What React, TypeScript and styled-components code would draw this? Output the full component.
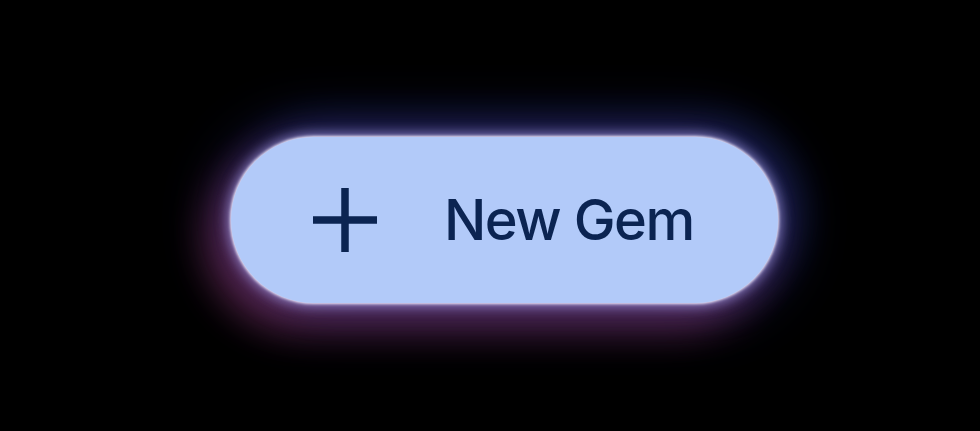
import styled, { createGlobalStyle } from 'styled-components';

const GlobalStyle = createGlobalStyle`
  html, body {
    margin: 0;
    padding: 0;
    background: #000000;
  }
`;

const Stage = styled.div`
  width: 980px;
  height: 431px;
  box-sizing: border-box;
  padding: 137px 0 0 231px;
  background: #000000;
  overflow: hidden;
`;

const GemButton = styled.button`
  display: flex;
  align-items: center;
  gap: 67px;
  box-sizing: border-box;
  width: 547px;
  height: 166px;
  padding: 0 0 0 82px;
  border: none;
  border-radius: 83px;
  background: #b2caf9;
  color: #0b2452;
  font-family: Inter, 'Noto Sans', sans-serif;
  font-size: 56px;
  font-weight: 500;
  letter-spacing: -1.5px;
  cursor: pointer;
  box-shadow:
    0 0 3px 1px rgba(245, 240, 255, 0.95),
    0 0 12px 4px rgba(185, 180, 255, 0.55),
    0 0 55px 16px rgba(40, 45, 130, 0.45),
    12px -8px 40px 6px rgba(60, 90, 210, 0.3),
    -16px 18px 40px 6px rgba(215, 75, 135, 0.48);
`;

const PlusIcon = () => (
  <svg width="64" height="64" viewBox="0 0 64 64" aria-hidden="true">
    <path d="M32 0V64M0 32H64" stroke="currentColor" strokeWidth="7.5" fill="none" />
  </svg>
);

const Label = styled.span`
  line-height: 1;
  white-space: nowrap;
`;

export default function App() {
  return (
    <>
      <GlobalStyle />
      <Stage>
        <GemButton>
          <PlusIcon />
          <Label>New Gem</Label>
        </GemButton>
      </Stage>
    </>
  );
}
